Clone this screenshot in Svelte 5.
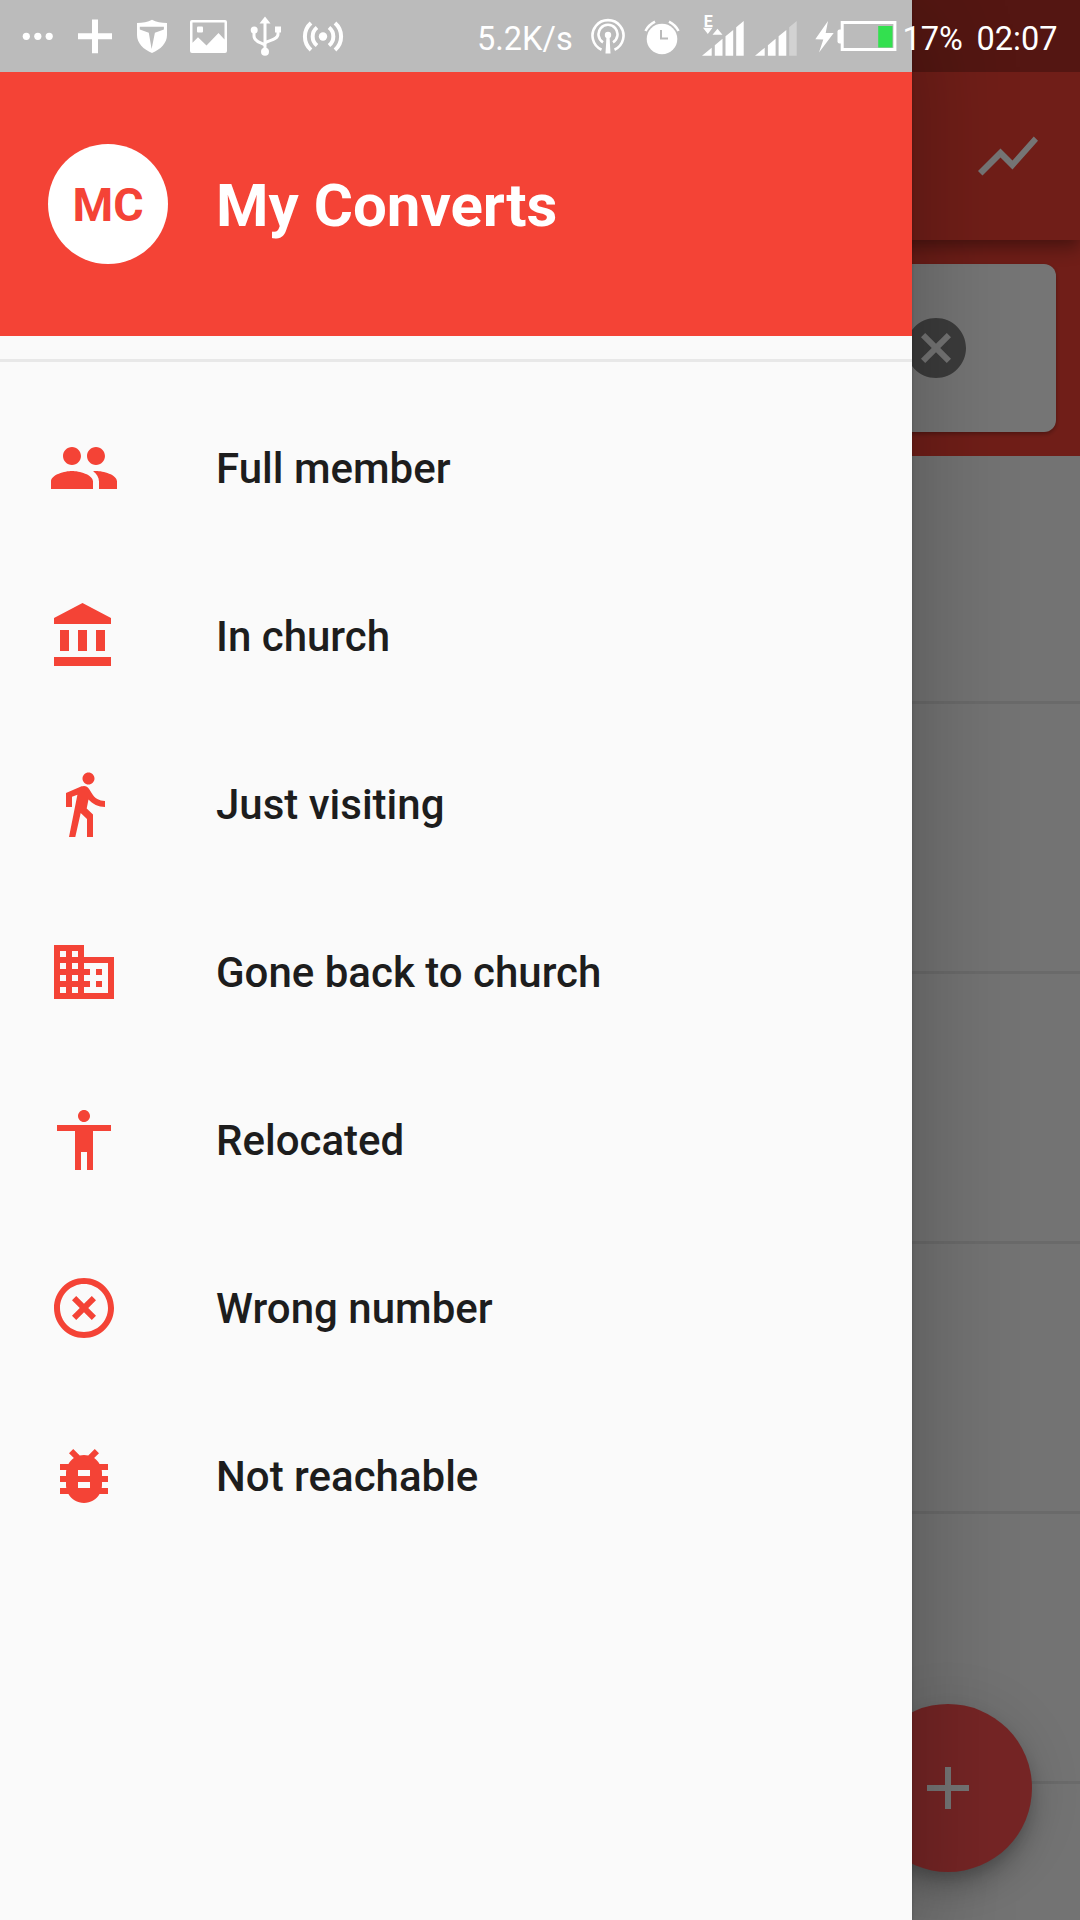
<script lang="ts">
	type MenuItem = { label: string; icon: string };

	const menu: MenuItem[] = [
		{
			label: 'Full member',
			icon: 'M16 11c1.66 0 2.99-1.34 2.99-3S17.66 5 16 5c-1.66 0-3 1.34-3 3s1.34 3 3 3zm-8 0c1.66 0 2.99-1.34 2.99-3S9.66 5 8 5C6.34 5 5 6.34 5 8s1.34 3 3 3zm0 2c-2.33 0-7 1.17-7 3.5V19h14v-2.5c0-2.33-4.67-3.5-7-3.5zm8 0c-.29 0-.62.02-.97.05 1.16.84 1.97 1.97 1.97 3.45V19h6v-2.5c0-2.33-4.67-3.5-7-3.5z'
		},
		{
			label: 'In church',
			icon: 'M4 10v7h3v-7H4zm6 0v7h3v-7h-3zM2 22h19v-3H2v3zm14-12v7h3v-7h-3zm-4.5-9L2 6v2h19V6l-9.5-5z'
		},
		{
			label: 'Just visiting',
			icon: 'M13.5 5.5c1.1 0 2-.9 2-2s-.9-2-2-2-2 .9-2 2 .9 2 2 2zM9.8 8.9L7 23h2.1l1.8-8 2.1 2v6h2v-7.5l-2.1-2 .6-3C14.8 12 16.8 13 19 13v-2c-1.9 0-3.5-1-4.3-2.4l-1-1.6c-.4-.6-1-1-1.7-1-.3 0-.5.1-.8.1L6 8.3V13h2V9.6l1.8-.7'
		},
		{
			label: 'Gone back to church',
			icon: 'M12 7V3H2v18h20V7H12zM6 19H4v-2h2v2zm0-4H4v-2h2v2zm0-4H4V9h2v2zm0-4H4V5h2v2zm4 12H8v-2h2v2zm0-4H8v-2h2v2zm0-4H8V9h2v2zm0-4H8V5h2v2zm10 12h-8v-2h2v-2h-2v-2h2v-2h-2V9h8v10zm-2-8h-2v2h2v-2zm0 4h-2v2h2v-2z'
		},
		{
			label: 'Relocated',
			icon: 'M12 2c1.1 0 2 .9 2 2s-.9 2-2 2-2-.9-2-2 .9-2 2-2zm9 7h-6v13h-2v-6h-2v6H9V9H3V7h18v2z'
		},
		{
			label: 'Wrong number',
			icon: 'M14.59 8L12 10.59 9.41 8 8 9.41 10.59 12 8 14.59 9.41 16 12 13.41 14.59 16 16 14.59 13.41 12 16 9.41 14.59 8zM12 2C6.47 2 2 6.47 2 12s4.47 10 10 10 10-4.47 10-10S17.53 2 12 2zm0 18c-4.41 0-8-3.59-8-8s3.59-8 8-8 8 3.59 8 8-3.59 8-8 8z'
		},
		{
			label: 'Not reachable',
			icon: 'M20 8h-2.81c-.45-.78-1.07-1.45-1.82-1.96L17 4.41 15.59 3l-2.17 2.17C12.96 5.06 12.49 5 12 5c-.49 0-.96.06-1.41.17L8.41 3 7 4.41l1.62 1.63C7.88 6.55 7.26 7.22 6.81 8H4v2h2.09c-.05.33-.09.66-.09 1v1H4v2h2v1c0 .34.04.67.09 1H4v2h2.81c1.04 1.79 2.97 3 5.19 3s4.15-1.21 5.19-3H20v-2h-2.09c.05-.33.09-.66.09-1v-1h2v-2h-2v-1c0-.34-.04-.67-.09-1H20V8zm-6 8h-4v-2h4v2zm0-4h-4v-2h4v2z'
		}
	];

	const rows = [1, 2, 3, 4, 5];
</script>

<div class="screen">
	<!-- page under the drawer -->
	<div class="page">
		<header class="app-bar">
			<svg class="icon" viewBox="0 0 24 24">
				<path d="M3.5 18.49l6-6.01 4 4L22 6.92l-1.41-1.41-7.09 7.97-4-4L2 16.99z" />
			</svg>
		</header>
		<div class="search">
			<div class="search-card">
				<svg class="icon" viewBox="0 0 24 24">
					<path
						d="M12 2C6.47 2 2 6.47 2 12s4.47 10 10 10 10-4.47 10-10S17.53 2 12 2zm5 13.59L15.59 17 12 13.41 8.41 17 7 15.59 10.59 12 7 8.41 8.41 7 12 10.59 15.59 7 17 8.41 13.41 12 17 15.59z"
					/>
				</svg>
			</div>
		</div>
		<div class="list">
			{#each rows as row (row)}
				<div class="list-row"></div>
			{/each}
		</div>
		<button class="fab" aria-label="Add">
			<svg class="icon" viewBox="0 0 24 24"><path d="M19 13h-6v6h-2v-6H5v-2h6V5h2v6h6v2z" /></svg>
		</button>
	</div>

	<div class="scrim"></div>

	<aside class="drawer">
		<div class="drawer-header">
			<div class="avatar">MC</div>
			<h1>My Converts</h1>
		</div>
		<div class="divider"></div>
		<nav>
			{#each menu as item (item.label)}
				<div class="menu-item">
					<svg class="icon" viewBox="0 0 24 24"><path d={item.icon} /></svg>
					<span>{item.label}</span>
				</div>
			{/each}
		</nav>
	</aside>

	<div class="status-bar">
		<div class="notifications">
			<svg width="32" height="72" viewBox="22 0 32 72">
				<circle cx="26.3" cy="36.3" r="3.6" />
				<circle cx="37.8" cy="36.3" r="3.6" />
				<circle cx="49.2" cy="36.3" r="3.6" />
			</svg>
			<svg width="36" height="72" viewBox="77 0 36 72">
				<path d="M92 19.500h6v13.700h14v6H98v14h-6v-14H78v-6h14z" />
			</svg>
			<svg width="31" height="72" viewBox="136 0 31 72">
				<path
					fill-rule="evenodd"
					d="M152 19.800c4 2.300 9.500 3.200 15 3.300v12c0 8-6.500 14.500-15 18-8.500-3.500-15-10-15-18v-12c5.500-.1 11-1 15-3.300zM139.800 26.700v2.800l9 3.200L151.600 49l3.300-16.300 9-3.200v-2.800z"
				/>
			</svg>
			<svg width="37" height="72" viewBox="190 0 37 72">
				<path
					fill-rule="evenodd"
					d="M192 20h33a2 2 0 0 1 2 2v29a2 2 0 0 1-2 2h-33a2 2 0 0 1-2-2V22a2 2 0 0 1 2-2zM192.500 22.500v20.300l5.500-5.500 8.500 8.300 12-12.500 6 6.500V22.500z"
				/>
				<rect x="197" y="26.500" width="6" height="6" rx="1" />
			</svg>
			<svg width="31" height="72" viewBox="250 0 31 72">
				<path d="M265 52V20M265 46c0-3-11-3-11-10v-6M265 44c0-4 13-3 13-10v-5" class="stroke" />
				<path d="M265 16.500l5.500 7h-11z" />
				<circle cx="265" cy="51.800" r="4" />
				<circle cx="254.200" cy="30" r="3.500" />
				<rect x="275" y="26.500" width="6" height="6" />
			</svg>
			<svg class="hotspot" width="39" height="72" viewBox="304 0 39 72">
				<circle cx="323" cy="36.500" r="4.200" />
				<path
					class="stroke wide"
					d="M317 27.500a11.500 11.500 0 0 0 0 18M329 27.500a11.500 11.500 0 0 1 0 18M311 23a18 18 0 0 0 0 27M335 23a18 18 0 0 1 0 27"
				/>
			</svg>
		</div>

		<div class="system">
			<span class="speed">5.2K/s</span>
			<svg class="cast" width="34" height="72" viewBox="590.500 0 34 72">
				<path
					class="stroke thin"
					d="M601 49.700a15.500 15.500 0 1 1 13 0M602.500 42.300a9.500 9.500 0 1 1 10 0"
				/>
				<circle cx="607.500" cy="35" r="3.200" />
				<path d="M606 36h3l1 17.500h-5z" />
			</svg>
			<svg class="alarm" width="36" height="72" viewBox="644 0 36 72">
				<circle cx="662" cy="39" r="15.300" />
				<path class="stroke thin" d="M645.500 31c2-4 5-7 9.500-9.300M678.500 31c-2-4-5-7-9.500-9.300" />
				<path class="hands" d="M661 30v8.500h7" />
			</svg>
			<svg class="signal" width="42" height="72" viewBox="701.500 0 42 72">
				<text x="703.200" y="26.500">E</text>
				<path d="M702.500 27.800h9.500l-4.700 6.300zM712 34.800h10l-5-6z" />
				<path
					d="M701.500 55.700l9.700-8v8zM714.300 45.200l7.700-6.400v16.900h-7.700zM725 36.300l7.700-6.400v25.800H725zM735.700 27.300l7.500-6.300v34.700h-7.500z"
				/>
			</svg>
			<svg class="signal-two" width="42" height="72" viewBox="755 0 42 72">
				<path
					d="M755 55.700l9.700-8v8zM767.900 45.200l7.700-6.400v16.900h-7.700zM778.600 36.300l7.700-6.400v25.800h-7.700z"
				/>
				<path opacity=".35" d="M789.200 27.300l7.500-6.300v34.700h-7.500z" />
			</svg>
			<svg class="battery" width="82" height="72" viewBox="814.500 0 82 72">
				<path d="M827.500 21L814.800 39.200l8 .3-4.300 12.900L833.200 33h-8z" />
				<path d="M837 31.500a2 2 0 0 1 2-2h2v14h-2a2 2 0 0 1-2-2z" />
				<rect x="841.700" y="22.500" width="52.700" height="27" class="stroke" />
				<rect x="877.700" y="26" width="14.300" height="21.500" class="level" />
			</svg>
			<span class="percent">17%</span>
			<span class="clock">02:07</span>
		</div>
	</div>
</div>

<style>
	:global(body) {
		margin: 0;
		background: #737373;
	}

	.screen {
		position: relative;
		width: 1080px;
		height: 1920px;
		overflow: hidden;
		font-family: Roboto, sans-serif;
	}

	.icon {
		display: block;
		width: 72px;
		height: 72px;
		flex: none;
		fill: currentColor;
	}

	.page {
		display: flex;
		flex-direction: column;
		height: 100%;
		background: #fafafa;
	}

	.app-bar {
		z-index: 1;
		display: flex;
		flex: none;
		align-items: center;
		justify-content: flex-end;
		box-sizing: border-box;
		height: 240px;
		padding: 72px 36px 0 0;
		background: #f44336;
		color: #fff;
		box-shadow:
			0 6px 12px -3px rgba(0, 0, 0, 0.2),
			0 12px 15px rgba(0, 0, 0, 0.14),
			0 3px 30px rgba(0, 0, 0, 0.12);
	}

	.search {
		flex: none;
		padding: 24px;
		background: #f44336;
	}

	.search-card {
		display: flex;
		align-items: center;
		justify-content: flex-end;
		box-sizing: border-box;
		height: 168px;
		padding-right: 84px;
		background: #fff;
		border-radius: 12px;
		color: #848484;
		box-shadow: 0 2px 4px rgba(0, 0, 0, 0.3);
	}

	.list-row {
		box-sizing: border-box;
		height: 270px;
		border-bottom: 3px solid #e7e7e7;
	}

	.list-row:first-child {
		height: 248px;
	}

	.fab {
		position: absolute;
		right: 48px;
		bottom: 48px;
		display: flex;
		align-items: center;
		justify-content: center;
		width: 168px;
		height: 168px;
		padding: 0;
		border: 0;
		border-radius: 50%;
		background: #ff5252;
		color: #fff;
		box-shadow:
			0 9px 15px -3px rgba(0, 0, 0, 0.2),
			0 18px 30px rgba(0, 0, 0, 0.14),
			0 3px 54px rgba(0, 0, 0, 0.12);
	}

	.scrim {
		position: absolute;
		inset: 0;
		z-index: 2;
		background: rgba(0, 0, 0, 0.54);
	}

	.drawer {
		position: absolute;
		inset: 0 auto 0 0;
		z-index: 3;
		box-sizing: border-box;
		width: 912px;
		padding-top: 72px;
		background: #fafafa;
		box-shadow:
			0 0 3px rgba(0, 0, 0, 0.2),
			0 24px 90px 10px rgba(0, 0, 0, 0.24);
	}

	.drawer-header {
		display: flex;
		align-items: center;
		box-sizing: border-box;
		height: 264px;
		padding: 0 48px;
		background: #f44336;
	}

	.avatar {
		display: flex;
		align-items: center;
		justify-content: center;
		box-sizing: border-box;
		width: 120px;
		height: 120px;
		margin-right: 48px;
		padding-top: 2px;
		border-radius: 50%;
		background: #fff;
		color: #f44336;
		font-size: 46.5px;
		font-weight: 700;
	}

	h1 {
		margin: 0;
		padding-top: 3px;
		color: #fff;
		font-size: 60px;
		font-weight: 700;
	}

	.divider {
		height: 3px;
		margin: 23px 0 22px;
		background: #e8e8e8;
	}

	.menu-item {
		display: flex;
		align-items: center;
		gap: 96px;
		height: 168px;
		padding: 0 48px;
		color: #f44336;
	}

	.menu-item span {
		padding-top: 1px;
		color: #1d1d1d;
		font-size: 42px;
		font-weight: 500;
	}

	.status-bar {
		position: absolute;
		inset: 0 0 auto;
		z-index: 4;
		display: flex;
		justify-content: space-between;
		box-sizing: border-box;
		height: 72px;
		padding: 0 20px 0 22px;
		background: rgba(0, 0, 0, 0.25);
		color: #fff;
		font-size: 32.5px;
		line-height: 78px;
		white-space: nowrap;
	}

	.status-bar svg {
		display: block;
		flex: none;
		fill: #fff;
	}

	.status-bar .hotspot {
		overflow: visible;
	}

	.status-bar .stroke {
		fill: none;
		stroke: #fff;
		stroke-width: 3;
	}

	.status-bar .wide {
		stroke-width: 4;
	}

	.status-bar .thin {
		stroke-width: 2.6;
	}

	.status-bar .hands {
		fill: none;
		stroke: #bbb;
		stroke-width: 2;
	}

	.status-bar .level {
		fill: #33e04f;
	}

	.status-bar text {
		font-size: 16px;
		font-weight: 700;
	}

	.notifications {
		display: flex;
		gap: 23px;
	}

	.system {
		display: flex;
	}

	.speed {
		width: 113.5px;
	}

	.alarm {
		margin-left: 19.5px;
	}

	.signal {
		margin-left: 21.5px;
	}

	.signal-two {
		margin-left: 11.5px;
	}

	.battery {
		margin-left: 17.5px;
	}

	.percent {
		width: 74px;
		margin-left: 6px;
	}

	.clock {
		width: 83.5px;
	}
</style>
